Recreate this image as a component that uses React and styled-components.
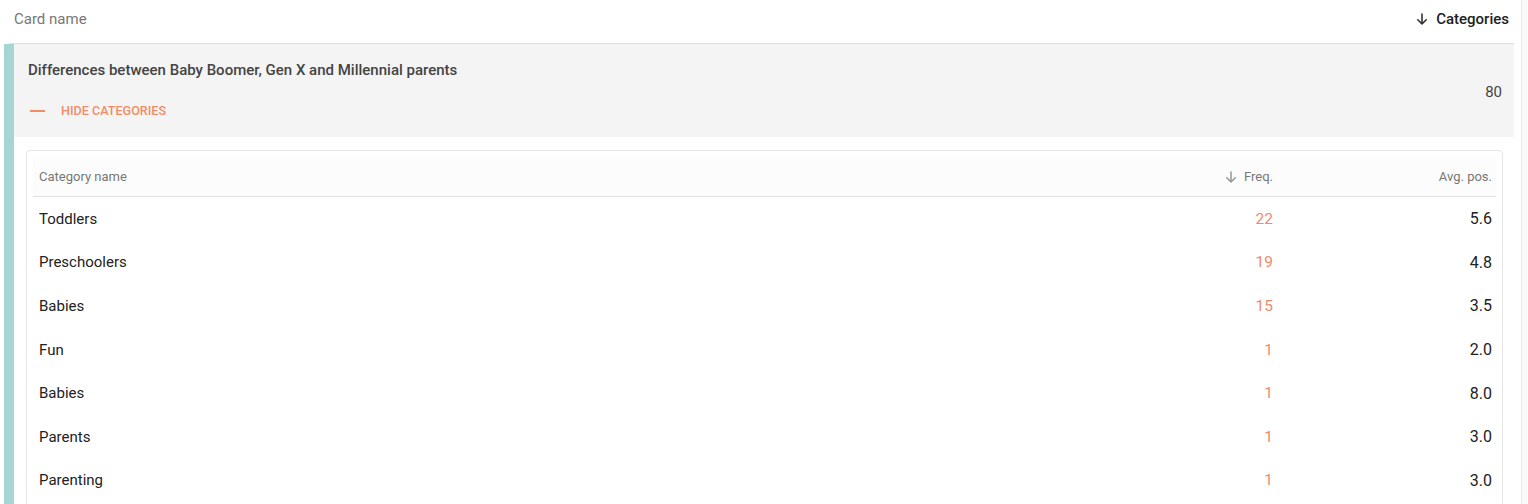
import React from "react";
import styled, { createGlobalStyle } from "styled-components";

const Global = createGlobalStyle`
  html, body { margin: 0; padding: 0; background: #fff; }
  body { font-family: Roboto, "Noto Sans", Arial, sans-serif; }
  * { box-sizing: border-box; }
`;

const Page = styled.div`
  display: flex;
  width: 1528px;
  height: 504px;
  overflow: hidden;
`;

const Main = styled.div`
  flex: 1;
  padding-right: 7px;
  min-width: 0;
`;

const ScrollTrack = styled.div`
  width: 7px;
  border-left: 1px solid #e8e8e8;
  background: #f9f9f9;
`;

const HeaderBar = styled.div`
  height: 44px;
  margin-left: 9px;
  padding: 0 5px 5px;
  display: flex;
  align-items: center;
  justify-content: space-between;
  border-bottom: 1px solid #dedede;
`;

const HeaderLabel = styled.div`
  font-size: 15px;
  color: ${(p) => (p.$strong ? "#222" : "#777")};
  font-weight: ${(p) => (p.$strong ? 500 : 400)};
  display: flex;
  align-items: center;
  gap: ${(p) => p.$gap || 0}px;
`;

const Group = styled.div`
  margin-left: 4px;
  border-left: 10px solid #a6d6d4;
`;

const GroupHead = styled.div`
  background: #f4f4f4;
  height: 93px;
  padding: 0 12px 0 14px;
  display: flex;
  align-items: center;
  justify-content: space-between;
`;

const GroupInfo = styled.div`
  display: flex;
  flex-direction: column;
  gap: 23px;
  margin-top: -2px;
`;

const GroupTitle = styled.div`
  font-size: 15px;
  font-weight: 500;
  color: #444;
  line-height: 20px;
`;

const HideToggle = styled.div`
  display: flex;
  align-items: center;
  gap: 16px;
  padding-left: 2px;
  font-size: 12.6px;
  font-weight: 500;
  color: #f08d68;
  text-transform: uppercase;
  line-height: 16px;
`;

const Dash = styled.span`
  width: 15px;
  height: 2px;
  background: #f08d68;
`;

const Total = styled.div`
  font-size: 15px;
  color: #444;
  margin-top: 2px;
`;

const Body = styled.div`
  padding: 13px 11px 0 12px;
`;

const Card = styled.div`
  border: 1px solid #e6e6e6;
  border-radius: 4px;
  padding: 6px 6px 20px;
`;

const Row = styled.div`
  display: grid;
  grid-template-columns: 1fr 160px 219px;
  align-items: center;
  padding: 0 4px 0 6px;
  height: ${(p) => (p.$head ? "40px" : "43.6px")};
  background: ${(p) => (p.$head ? "#fcfcfc" : "transparent")};
  border-bottom: ${(p) => (p.$head ? "1px solid #e2e2e2" : "none")};
`;

const HeadCell = styled.div`
  font-size: 13px;
  color: #777;
  display: flex;
  align-items: center;
  justify-content: ${(p) => (p.$right ? "flex-end" : "flex-start")};
  gap: 7px;
`;

const Cell = styled.div`
  font-size: ${(p) => p.$size || 15}px;
  color: ${(p) => p.$color || "#222"};
  text-align: ${(p) => (p.$right ? "right" : "left")};
`;

const ArrowDown = ({ size = 12, color = "#333", width = 1.6 }) => (
  <svg width={size} height={size} viewBox="0 0 12 12" fill="none">
    <path d="M6 1v10M1.8 6.8 6 11l4.2-4.2" stroke={color} strokeWidth={width} strokeLinecap="round" strokeLinejoin="round" />
  </svg>
);

const rows = [
  ["Toddlers", 22, "5.6"],
  ["Preschoolers", 19, "4.8"],
  ["Babies", 15, "3.5"],
  ["Fun", 1, "2.0"],
  ["Babies", 1, "8.0"],
  ["Parents", 1, "3.0"],
  ["Parenting", 1, "3.0"],
];

export default function App() {
  return (
    <>
      <Global />
      <Page>
        <Main>
          <HeaderBar>
            <HeaderLabel>Card name</HeaderLabel>
            <HeaderLabel $strong $gap={8}>
              <ArrowDown size={12} color="#333" />
              Categories
            </HeaderLabel>
          </HeaderBar>
          <Group>
            <GroupHead>
              <GroupInfo>
                <GroupTitle>Differences between Baby Boomer, Gen X and Millennial parents</GroupTitle>
                <HideToggle>
                  <Dash />
                  Hide categories
                </HideToggle>
              </GroupInfo>
              <Total>80</Total>
            </GroupHead>
            <Body>
              <Card>
                <Row $head>
                  <HeadCell>Category name</HeadCell>
                  <HeadCell $right>
                    <ArrowDown size={12} color="#999" />
                    Freq.
                  </HeadCell>
                  <HeadCell $right>Avg. pos.</HeadCell>
                </Row>
                {rows.map(([name, freq, avg], i) => (
                  <Row key={i}>
                    <Cell>{name}</Cell>
                    <Cell $right $size={15.5} $color="#ee8a6c">{freq}</Cell>
                    <Cell $right $size={16}>{avg}</Cell>
                  </Row>
                ))}
              </Card>
            </Body>
          </Group>
        </Main>
        <ScrollTrack />
      </Page>
    </>
  );
}
